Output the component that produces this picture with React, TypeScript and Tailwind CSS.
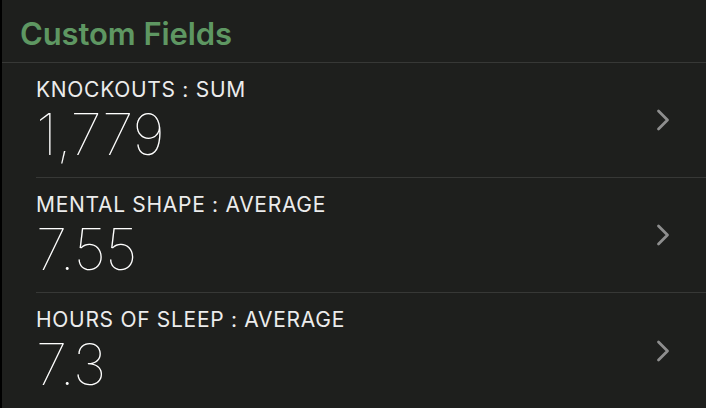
const fields = [
  { label: "KNOCKOUTS : SUM", value: "1,779" },
  { label: "MENTAL SHAPE : AVERAGE", value: "7.55" },
  { label: "HOURS OF SLEEP : AVERAGE", value: "7.3" },
];

function Chevron() {
  return (
    <svg width="14" height="22" viewBox="0 0 14 22" fill="none" className="shrink-0">
      <path d="M2.5 2 L11.5 11 L2.5 20" stroke="#8e8e8e" strokeWidth="2.8" strokeLinecap="round" strokeLinejoin="round" />
    </svg>
  );
}

export default function App() {
  return (
    <div
      className="w-[706px] h-[408px] overflow-hidden bg-black pl-[2px]"
      style={{ fontFamily: "Inter, 'Noto Sans', sans-serif" }}
    >
      <div className="h-full bg-[#1e1f1d]">
        {/* header */}
        <div className="h-[63px] flex items-end pl-[18px] pb-[13px] border-b border-[#373836]">
          <h1 className="text-[31px] leading-none font-semibold text-[#5e9762] tracking-[-0.1px]">
            Custom Fields
          </h1>
        </div>

        {fields.map((f, i) => (
          <div key={f.label} className="pl-[34px]">
            <div
              className={`h-[115px] flex items-center pr-[36px] ${
                i < fields.length - 1 ? "border-b border-[#373836]" : ""
              }`}
            >
              <div className="flex-1 flex flex-col pt-[2px]">
                <span className="text-[21px] leading-[24px] text-[#ececec] tracking-[0.7px]">
                  {f.label}
                </span>
                <span className="mt-[3px] text-[57px] leading-[60px] font-thin text-white tracking-[-0.5px]">
                  {f.value}
                </span>
              </div>
              <Chevron />
            </div>
          </div>
        ))}
      </div>
    </div>
  );
}
